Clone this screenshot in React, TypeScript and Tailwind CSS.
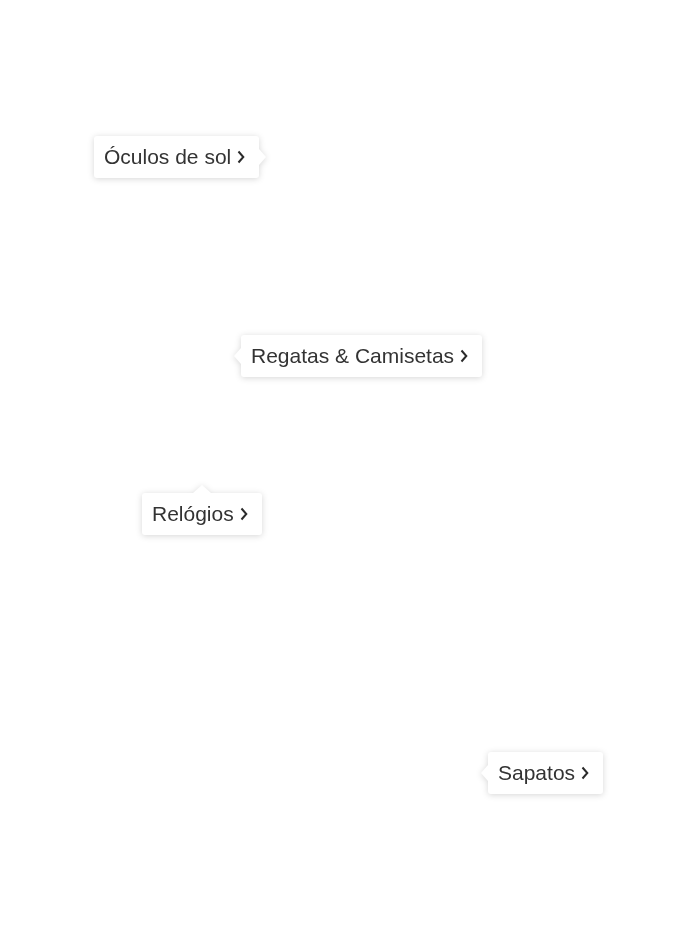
import React from "react";

type Side = "left" | "right" | "top";

function Chevron() {
  return (
    <svg width="8" height="14" viewBox="0 0 8 14" className="ml-[6px] shrink-0">
      <path d="M1.5 1.5 L6.3 7 L1.5 12.5" fill="none" stroke="#2b2b2b" strokeWidth="2" strokeLinecap="butt" strokeLinejoin="miter" />
    </svg>
  );
}

function Tip({ label, side, x, y }: { label: string; side: Side; x: number; y: number }) {
  return (
    <div
      className="absolute drop-shadow-[0_1px_3px_rgba(0,0,0,0.16)]"
      style={{ left: x, top: y }}
    >
      <div className="relative flex h-[42px] items-center rounded-[3px] bg-white pl-[10px] pr-[14px] text-[21px] leading-[22px] text-[#333333] whitespace-nowrap [font-family:'Liberation_Sans',Arial,sans-serif]">
        <span className="-mt-[1px]">{label}</span>
        <Chevron />
        {side === "right" && (
          <div className="absolute right-[-7px] top-1/2 -translate-y-1/2 h-0 w-0 border-y-[8px] border-y-transparent border-l-[7px] border-l-white" />
        )}
        {side === "left" && (
          <div className="absolute left-[-7px] top-1/2 -translate-y-1/2 h-0 w-0 border-y-[8px] border-y-transparent border-r-[7px] border-r-white" />
        )}
        {side === "top" && (
          <div className="absolute top-[-8px] left-1/2 -translate-x-1/2 h-0 w-0 border-x-[9px] border-x-transparent border-b-[8px] border-b-white" />
        )}
      </div>
    </div>
  );
}

export default function App() {
  return (
    <div className="relative h-[925px] w-[696px] overflow-hidden bg-white">
      <Tip label="Óculos de sol" side="right" x={94} y={136} />
      <Tip label="Regatas & Camisetas" side="left" x={241} y={335} />
      <Tip label="Relógios" side="top" x={142} y={493} />
      <Tip label="Sapatos" side="left" x={488} y={752} />
    </div>
  );
}
